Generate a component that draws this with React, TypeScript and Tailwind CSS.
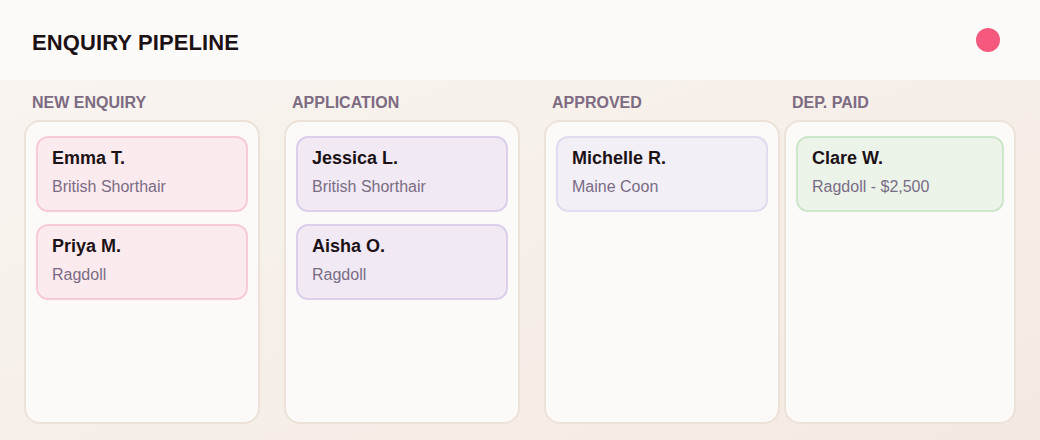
type Lead = { name: string; detail: string };

type Stage = {
  title: string;
  width: string;
  card: string;
  leads: Lead[];
};

const stages: Stage[] = [
  {
    title: "NEW ENQUIRY",
    width: "w-[236px]",
    card: "bg-[#fcebee] border-[#f7ccd6]",
    leads: [
      { name: "Emma T.", detail: "British Shorthair" },
      { name: "Priya M.", detail: "Ragdoll" },
    ],
  },
  {
    title: "APPLICATION",
    width: "w-[236px] ml-6",
    card: "bg-[#f1eaf4] border-[#dccfec]",
    leads: [
      { name: "Jessica L.", detail: "British Shorthair" },
      { name: "Aisha O.", detail: "Ragdoll" },
    ],
  },
  {
    title: "APPROVED",
    width: "w-[236px] ml-6",
    card: "bg-[#f3eff6] border-[#e3dbef]",
    leads: [{ name: "Michelle R.", detail: "Maine Coon" }],
  },
  {
    title: "DEP. PAID",
    width: "w-[232px] ml-1",
    card: "bg-[#ecf4ea] border-[#cde6cc]",
    leads: [{ name: "Clare W.", detail: "Ragdoll - $2,500" }],
  },
];

function LeadCard({ lead, tone }: { lead: Lead; tone: string }) {
  return (
    <div className={`rounded-[12px] border-2 px-[14px] pt-[8px] pb-[10px] ${tone}`}>
      <div className="text-[18px] leading-[24px] font-bold text-[#1c1216]">
        {lead.name}
      </div>
      <div className="mt-[4px] text-[16px] leading-[26px] text-[#7a6c85]">
        {lead.detail}
      </div>
    </div>
  );
}

export default function App() {
  return (
    <div
      className="w-[1040px] h-[440px] flex flex-col bg-gradient-to-br from-[#f9f5f1] to-[#f4eae2] overflow-hidden"
      style={{ fontFamily: '"Liberation Sans", Arial, sans-serif' }}
    >
      <header className="h-[80px] shrink-0 flex items-center justify-between pl-8 pr-[40px] bg-[#fdfbfa]">
        <h1 className="text-[22px] leading-[28px] font-bold tracking-[0.1px] text-[#1c1216] pt-[6px]">
          ENQUIRY PIPELINE
        </h1>
        <span className="w-6 h-6 rounded-full bg-[#f5597d]" />
      </header>

      <main className="flex-1 flex px-6 pt-[13px] pb-4">
        {stages.map((stage) => (
          <section key={stage.title} className={`flex flex-col ${stage.width}`}>
            <h2 className="px-2 h-[27px] text-[16px] leading-[20px] font-bold text-[#7d6b82]">
              {stage.title}
            </h2>
            <div className="flex-1 flex flex-col gap-3 rounded-[16px] border-2 border-[#ece2d7] bg-[#fcfaf8] px-[10px] pt-[14px]">
              {stage.leads.map((lead) => (
                <LeadCard key={lead.name} lead={lead} tone={stage.card} />
              ))}
            </div>
          </section>
        ))}
      </main>
    </div>
  );
}
